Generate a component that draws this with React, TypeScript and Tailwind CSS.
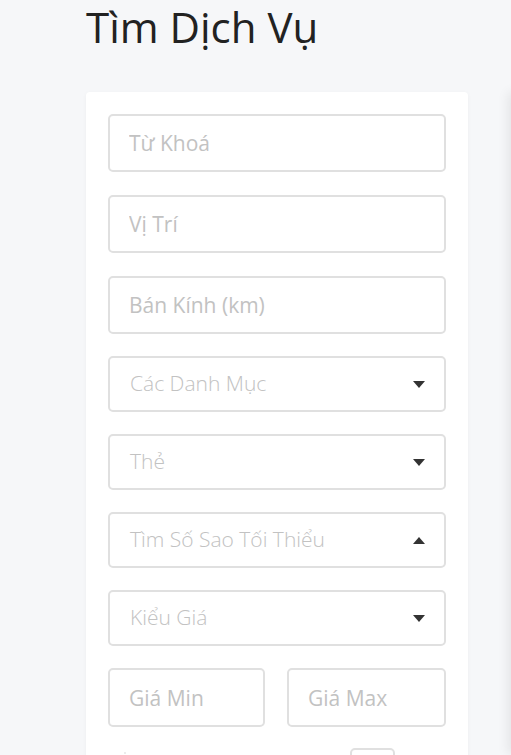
import { ReactNode } from 'react';

function TextField({ placeholder }: { placeholder: string }) {
  return (
    <input
      type="text"
      placeholder={placeholder}
      className="h-[58px] w-full rounded-[5px] border-2 border-[#e0e0e0] bg-white px-[19px] text-[21px] text-[#555] outline-none placeholder:text-[#c2c2c2]"
    />
  );
}

function Caret({ up = false }: { up?: boolean }) {
  return (
    <svg width="12" height="7" viewBox="0 0 12 7" className="shrink-0">
      {up ? <path d="M0 7 L6 0 L12 7 Z" fill="#333" /> : <path d="M0 0 L12 0 L6 7 Z" fill="#333" />}
    </svg>
  );
}

function SelectField({ label, up }: { label: string; up?: boolean }) {
  return (
    <div className="flex h-[56px] w-full items-center justify-between rounded-[5px] border-2 border-[#e0e0e0] bg-white pl-[20px] pr-[19px]">
      <span className="text-[21px] font-light text-[#c2c2c2]">{label}</span>
      <Caret up={up} />
    </div>
  );
}

function Card({ children }: { children: ReactNode }) {
  return (
    <div className="flex flex-col rounded-[4px] bg-white p-[22px] shadow-[0_1px_4px_rgba(0,0,0,0.04)]">
      {children}
    </div>
  );
}

export default function App() {
  return (
    <div
      className="flex h-[755px] overflow-hidden bg-[#f6f7f9]"
      style={{ fontFamily: '"Open Sans", "Noto Sans", sans-serif' }}
    >
      <div className="ml-[86px] flex w-[382px] shrink-0 flex-col">
        <h1 className="mt-[1px] text-[42px] font-normal leading-[52px] text-[#222]">Tìm Dịch Vụ</h1>
        <div className="mt-[39px]">
          <Card>
            <div className="flex flex-col gap-[23px]">
              <TextField placeholder="Từ Khoá" />
              <TextField placeholder="Vị Trí" />
              <TextField placeholder="Bán Kính (km)" />
            </div>
            <div className="mt-[22px] flex flex-col gap-[22px]">
              <SelectField label="Các Danh Mục" />
              <SelectField label="Thẻ" />
              <SelectField label="Tìm Số Sao Tối Thiểu" up />
              <SelectField label="Kiểu Giá" />
            </div>
            <div className="mt-[22px] flex gap-[22px]">
              <input
                type="text"
                placeholder="Giá Min"
                className="h-[59px] w-[157px] rounded-[5px] border-2 border-[#e0e0e0] bg-white px-[19px] text-[21px] outline-none placeholder:text-[#c2c2c2]"
              />
              <input
                type="text"
                placeholder="Giá Max"
                className="h-[59px] w-[159px] rounded-[5px] border-2 border-[#e0e0e0] bg-white px-[19px] text-[21px] outline-none placeholder:text-[#c2c2c2]"
              />
            </div>
            <div className="mt-[21px] flex items-start justify-between">
              <span className="ml-[16px] mt-[4px] h-[2px] w-[2px] rounded-full bg-[#e6e6e6]" />
              <div className="mr-[51px] h-[40px] w-[45px] rounded-[5px] border-2 border-[#e0e0e0]" />
            </div>
          </Card>
        </div>
      </div>
      <div className="ml-[43px] mt-[92px] w-[300px] shrink-0 rounded-[4px] bg-white shadow-[-3px_0_12px_rgba(0,0,0,0.08)]" />
    </div>
  );
}
